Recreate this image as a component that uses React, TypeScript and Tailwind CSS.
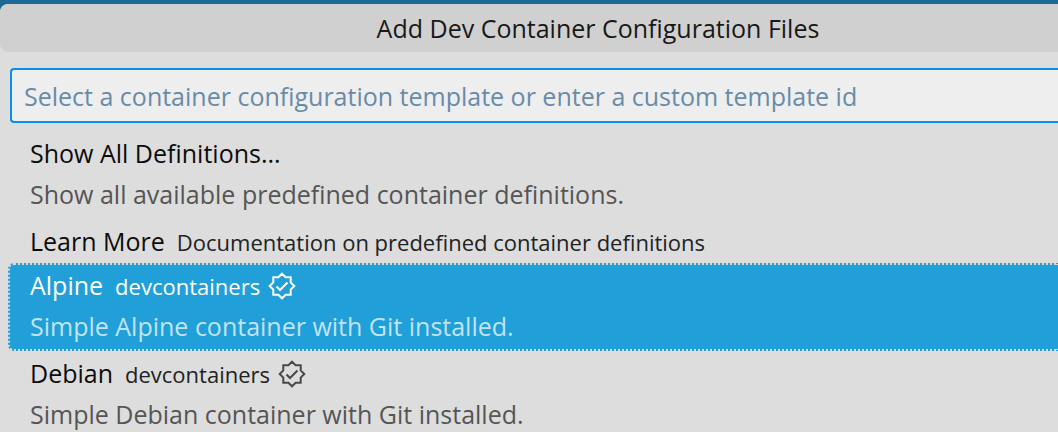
type Item = {
  label: string;
  note?: string;
  detail?: string;
  verified?: boolean;
};

const items: Item[] = [
  { label: 'Show All Definitions...', detail: 'Show all available predefined container definitions.' },
  { label: 'Learn More', note: 'Documentation on predefined container definitions' },
  { label: 'Alpine', note: 'devcontainers', detail: 'Simple Alpine container with Git installed.', verified: true },
  { label: 'Debian', note: 'devcontainers', detail: 'Simple Debian container with Git installed.', verified: true },
];

const selected = 2;

function VerifiedIcon({ className }: { className: string }) {
  return (
    <svg
      viewBox="-14 -14 28 28"
      className={`size-7 shrink-0 ${className}`}
      fill="none"
      stroke="currentColor"
      strokeWidth="2"
      aria-hidden="true"
    >
      <path d="M0-12.3 3.6-8.7H8.7V-3.6L12.3 0 8.7 3.6V8.7H3.6L0 12.3-3.6 8.7H-8.7V3.6L-12.3 0-8.7-3.6V-8.7H-3.6Z" />
      <path d="M-5.5.5-2 4 5.5-3.5" />
    </svg>
  );
}

function Row({ item, active }: { item: Item; active: boolean }) {
  return (
    <li>
      <button
        type="button"
        aria-pressed={active}
        className={`flex w-full flex-col rounded-l-md border-2 border-r-0 pl-5 text-left whitespace-nowrap ${
          active ? 'border-dotted border-[#d8d8d8] bg-[#219fd9] text-white' : 'border-transparent text-[#0c0c0c]'
        }`}
      >
        <span className="flex h-10 items-center pt-0.5">
          <span className="text-[25px]">{item.label}</span>
          {item.note && (
            <span className={`ml-3 text-[22px] ${active ? 'text-white' : 'text-[#222222]'}`}>{item.note}</span>
          )}
          {item.verified && <VerifiedIcon className={`ml-2 ${active ? 'text-white' : 'text-[#484848]'}`} />}
        </span>
        {item.detail && (
          <span className={`h-11 text-[25px] leading-[42px] ${active ? 'text-[#c0e3f5]' : 'text-[#555555]'}`}>
            {item.detail}
          </span>
        )}
      </button>
    </li>
  );
}

export default function App() {
  return (
    <div className="h-screen overflow-hidden bg-[#1b6a94] pt-1 font-['Open_Sans','Noto_Sans',sans-serif]">
      <main className="h-full overflow-hidden rounded-tl-lg bg-[#dddddd]">
        <h1 className="h-12 rounded-l-lg bg-[#d0d0d0] pl-[138px] text-center text-[25px] leading-[48px] whitespace-nowrap text-[#181818]">
          Add Dev Container Configuration Files
        </h1>
        <div className="mt-4 ml-[10px]">
          <input
            type="text"
            aria-label="Container configuration template"
            placeholder="Select a container configuration template or enter a custom template id"
            className="block h-[55px] w-full rounded-l-sm border-2 border-r-0 border-[#0590f0] bg-[#eeeeee] pl-3 text-[25px] text-[#222222] outline-none placeholder:text-[#688ba8]"
          />
        </div>
        <ul className="mt-2 ml-2">
          {items.map((item, index) => (
            <Row key={item.label} item={item} active={index === selected} />
          ))}
        </ul>
      </main>
    </div>
  );
}
